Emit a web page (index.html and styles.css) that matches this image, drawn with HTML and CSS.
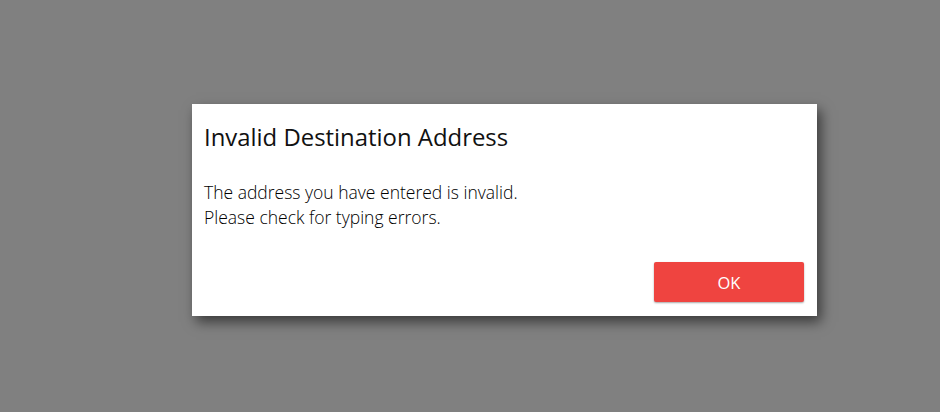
FILE: index.html
```html
<!DOCTYPE html>
<html>
<head>
<meta charset="utf-8">
<link rel="stylesheet" href="styles.css">
</head>
<body>
<div class="overlay">
  <div class="dialog">
    <h1 class="title">Invalid Destination Address</h1>
    <p class="message">The address you have entered is invalid.<br>Please check for typing errors.</p>
    <div class="actions">
      <button class="ok">OK</button>
    </div>
  </div>
</div>
</body>
</html>
```

FILE: styles.css
```css
html, body {
  margin: 0;
  padding: 0;
  width: 940px;
  height: 412px;
  background: #808080;
  font-family: "Open Sans", "Noto Sans", sans-serif;
  overflow: hidden;
}
.overlay {
  padding: 104px 0 0 192px;
}
.dialog {
  width: 625px;
  height: 212px;
  box-sizing: border-box;
  background: #ffffff;
  box-shadow: 4px 6px 12px rgba(0, 0, 0, 0.55);
  padding: 16px 13px 14px 12px;
  display: flex;
  flex-direction: column;
}
.title {
  margin: 0;
  font-size: 23.9px;
  font-weight: 400;
  color: #111;
  line-height: 34px;
}
.message {
  margin: 26px 0 0 0;
  font-size: 17.5px;
  font-weight: 300;
  line-height: 25px;
  color: #000;
}
.actions {
  margin-top: auto;
  display: flex;
  justify-content: flex-end;
}
.ok {
  width: 150px;
  height: 40px;
  border: none;
  border-radius: 2px;
  background: #ef4440;
  color: #fff;
  font-family: "Open Sans", "Noto Sans", sans-serif;
  font-size: 16.5px;
  box-shadow: 0 1px 2px rgba(0, 0, 0, 0.35);
}
```
